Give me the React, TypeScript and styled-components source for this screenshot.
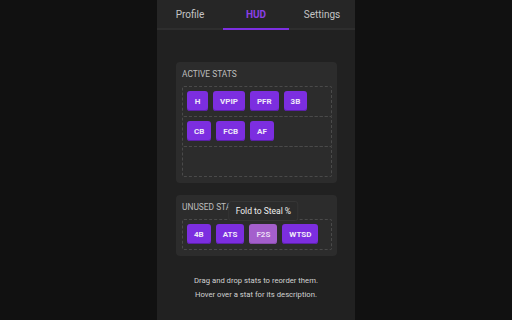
import React from "react";
import styled, { createGlobalStyle } from "styled-components";

const Global = createGlobalStyle`
  html, body { margin: 0; padding: 0; background: #111111; }
  body { font-family: Roboto, "Liberation Sans", Arial, sans-serif; }
`;

const Page = styled.div`
  display: flex;
  justify-content: center;
  height: 320px;
  background: #111111;
`;

const Panel = styled.div`
  width: 198px;
  height: 320px;
  background: #212121;
  display: flex;
  flex-direction: column;
`;

const Tabs = styled.div`
  display: grid;
  grid-template-columns: repeat(3, 1fr);
  height: 28px;
  background: #262626;
  border-bottom: 2px solid #2e2e2e;
`;

const Tab = styled.div<{ $active?: boolean }>`
  position: relative;
  display: flex;
  align-items: center;
  justify-content: center;
  font-size: 10px;
  color: ${(p) => (p.$active ? "#8b3fe6" : "#c4c4c4")};
  font-weight: ${(p) => (p.$active ? 700 : 400)};
  &::after {
    content: "";
    display: ${(p) => (p.$active ? "block" : "none")};
    position: absolute;
    left: 0;
    right: 0;
    bottom: -2px;
    height: 2px;
    background: #7d2fe0;
  }
`;

const Body = styled.div`
  display: flex;
  flex-direction: column;
  gap: 12px;
  padding: 32px 18px 0 19px;
`;

const Card = styled.div`
  background: #2c2c2c;
  border-radius: 4px;
  padding: 6px 5px 6px 6px;
`;

const Title = styled.div`
  font-size: 8.4px;
  line-height: 12px;
  color: #bdbdbd;
  text-transform: uppercase;
  margin-bottom: 6px;
`;

const Row = styled.div`
  display: flex;
  gap: 5px;
  height: 21px;
  padding: 4px;
  border: 1px dashed #4a4a4a;
  border-radius: 2px;
  & + & {
    margin-top: -1px;
  }
`;

const Stat = styled.div<{ $hover?: boolean }>`
  position: relative;
  display: flex;
  align-items: center;
  justify-content: center;
  height: 20px;
  padding: 0 7px;
  min-width: 7px;
  border-radius: 3px;
  font-size: 8px;
  font-weight: 700;
  color: ${(p) => (p.$hover ? "#ead9f5" : "#f0eaf8")};
  background: ${(p) => (p.$hover ? "#a45fcc" : "#7c2ee0")};
  box-shadow: inset 0 -1px 0 ${(p) => (p.$hover ? "#8a4cae" : "#5b20a8")};
`;

const Tooltip = styled.div`
  position: absolute;
  bottom: 23px;
  left: 50%;
  transform: translateX(-50%);
  white-space: nowrap;
  padding: 0 6px;
  height: 18px;
  display: flex;
  align-items: center;
  background: #2b2b2b;
  border: 1px solid #363636;
  border-radius: 3px;
  font-size: 8.5px;
  font-weight: 400;
  color: #eeeeee;
`;

const Help = styled.div`
  margin-top: 18px;
  text-align: center;
  font-size: 7.7px;
  line-height: 14px;
  color: #d2d2d2;
`;

const rows = [["H", "VPIP", "PFR", "3B"], ["CB", "FCB", "AF"], []];
const unused = ["4B", "ATS", "F2S", "WTSD"];

export default function App() {
  return (
    <>
      <Global />
      <Page>
        <Panel>
          <Tabs>
            <Tab>Profile</Tab>
            <Tab $active>HUD</Tab>
            <Tab>Settings</Tab>
          </Tabs>
          <Body>
            <Card>
              <Title>Active Stats</Title>
              {rows.map((r, i) => (
                <Row key={i}>
                  {r.map((s) => (
                    <Stat key={s}>{s}</Stat>
                  ))}
                </Row>
              ))}
            </Card>
            <Card>
              <Title>Unused Stats</Title>
              <Row>
                {unused.map((s) => (
                  <Stat key={s} $hover={s === "F2S"}>
                    {s}
                    {s === "F2S" && <Tooltip>Fold to Steal %</Tooltip>}
                  </Stat>
                ))}
              </Row>
            </Card>
          </Body>
          <Help>
            Drag and drop stats to reorder them.
            <br />
            Hover over a stat for its description.
          </Help>
        </Panel>
      </Page>
    </>
  );
}
